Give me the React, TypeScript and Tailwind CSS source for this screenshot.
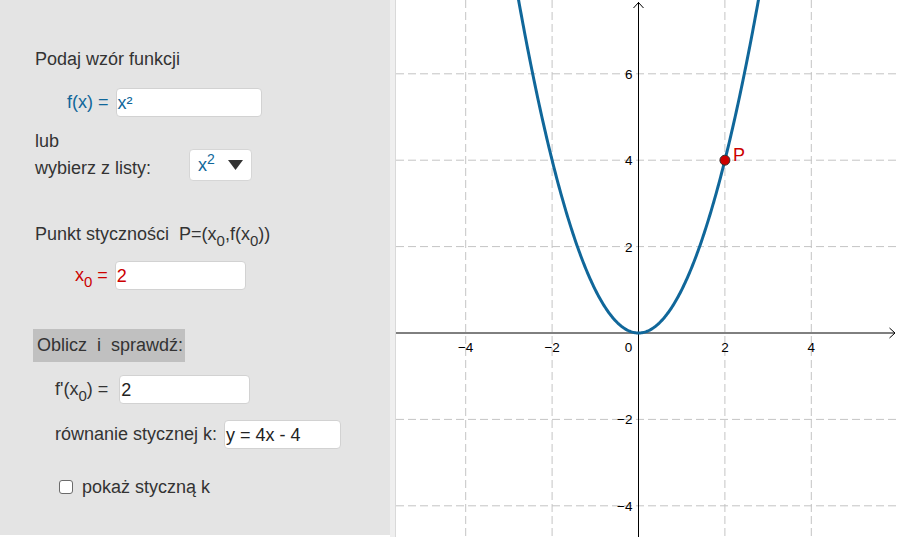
import React from 'react';

const BLUE = '#10679a';
const RED = '#cc0000';

// graph geometry, local svg coords
const W = 502;
const H = 537;
const OX = 242.5;
const OY = 333;
const S = 43.2;

function Sub({ children }: { children: React.ReactNode }) {
  return <span className="relative top-[6px] text-[15px] leading-none">{children}</span>;
}

function Field({ value, color, width }: { value: string; color?: string; width: string }) {
  return (
    <div
      className={`h-[29px] ${width} bg-white border border-[#d2d2d2] rounded-[4px] pl-[1px] flex items-center text-[18px] leading-none`}
      style={{ color: color ?? '#222' }}
    >
      {value}
    </div>
  );
}

function Graph() {
  const pts: string[] = [];
  for (let x = -3; x <= 3.0001; x += 0.02) {
    pts.push(`${(OX + x * S).toFixed(2)},${(OY - x * x * S).toFixed(2)}`);
  }
  const xs = [-4, -2, 2, 4];
  const ys = [6, 4, 2, -2, -4];
  const fmt = (n: number) => (n < 0 ? `\u2212${-n}` : `${n}`);
  return (
    <svg width={W} height={H} className="block" style={{ fontFamily: '"Liberation Sans", Arial, sans-serif' }}>
      {xs.map((v) => (
        <line key={`vx${v}`} x1={OX + v * S} x2={OX + v * S} y1={0} y2={H} stroke="#c4c4c4" strokeDasharray="8 4" />
      ))}
      {ys.map((v) => (
        <line key={`hy${v}`} x1={0} x2={W} y1={OY - v * S} y2={OY - v * S} stroke="#c4c4c4" strokeDasharray="8 4" />
      ))}
      {/* axes */}
      <line x1={0} x2={W - 3} y1={OY} y2={OY} stroke="#000" />
      <polyline points={`${W - 8.5},${OY - 5} ${W - 3},${OY} ${W - 8.5},${OY + 5}`} fill="none" stroke="#000" />
      <line x1={OX} x2={OX} y1={2} y2={H} stroke="#000" />
      <polyline points={`${OX - 5},${8} ${OX},${2.5} ${OX + 5},${8}`} fill="none" stroke="#000" />
      {xs.map((v) => (
        <text key={`lx${v}`} x={OX + v * S} y={352} fontSize={13.5} textAnchor="middle" fill="#000">
          {fmt(v)}
        </text>
      ))}
      <text x={OX - 10} y={352} fontSize={13.5} textAnchor="middle" fill="#000">
        0
      </text>
      {ys.map((v) => (
        <text key={`ly${v}`} x={OX - 6} y={OY - v * S + 5} fontSize={13.5} textAnchor="end" fill="#000">
          {fmt(v)}
        </text>
      ))}
      <polyline points={pts.join(' ')} fill="none" stroke={BLUE} strokeWidth={3} strokeLinejoin="round" />
      <circle cx={OX + 2 * S} cy={OY - 4 * S} r={5} fill={RED} stroke="#333" strokeWidth={1} />
      <text x={OX + 2 * S + 8} y={OY - 4 * S + 1} fontSize={18} fill={RED}>
        P
      </text>
    </svg>
  );
}

export default function App() {
  return (
    <div
      className="w-[898px] h-[537px] flex bg-white overflow-hidden text-[#333]"
      style={{ fontFamily: '"Liberation Sans", Arial, sans-serif' }}
    >
      <div className="w-[390px] h-[535px] bg-[#e4e4e4] pl-[35px] pt-[47px] flex flex-col text-[18px]">
        <div className="h-[24px] leading-[24px]">Podaj wzór funkcji</div>

        <div className="mt-[17px] pl-[32px] flex items-center gap-[7px]">
          <span style={{ color: BLUE }}>f(x) =</span>
          <Field value="x²" color={BLUE} width="w-[146px]" />
        </div>

        <div className="mt-[11px] flex items-end">
          <div className="flex flex-col leading-[27px] w-[154px]">
            <span>lub</span>
            <span>wybierz z listy:</span>
          </div>
          <div className="mb-[1px] h-[32px] w-[63px] bg-white border border-[#d6d6d6] rounded-[4px] flex items-center pl-[8px] gap-[13px]">
            <span className="leading-none" style={{ color: BLUE }}>
              x<span className="relative top-[-7px] text-[14px]">2</span>
            </span>
            <svg width="15" height="10" viewBox="0 0 15 10">
              <polygon points="0,0 15,0 7.5,10" fill="#333" />
            </svg>
          </div>
        </div>

        <div className="mt-[40px] h-[24px] leading-[24px] whitespace-pre">
          Punkt styczności  P=(x<Sub>0</Sub>,f(x<Sub>0</Sub>))
        </div>

        <div className="mt-[15px] pl-[40px] flex items-center gap-[7px]">
          <span style={{ color: RED }}>
            x<Sub>0</Sub> =
          </span>
          <Field value="2" color={RED} width="w-[131px]" />
        </div>

        <div className="mt-[39px] -ml-[2px] w-[152px] h-[33px] bg-[#c0c0c0] flex items-center pl-[4px] whitespace-pre">
          Oblicz  i  sprawdź:
        </div>

        <div className="mt-[13px] pl-[20px] flex items-center gap-[11px]">
          <span>
            f'(x<Sub>0</Sub>) =
          </span>
          <Field value="2" width="w-[131px]" />
        </div>

        <div className="mt-[16px] pl-[20px] flex items-center gap-[7px]">
          <span>równanie stycznej k:</span>
          <Field value="y = 4x - 4" width="w-[117px]" />
        </div>

        <div className="mt-[31px] pl-[24px] flex items-center gap-[9px] h-[14px]">
          <div className="w-[14px] h-[14px] bg-white border border-[#6b6b6b] rounded-[3px]" />
          <span className="leading-none">pokaż styczną k</span>
        </div>
      </div>
      <div className="w-[6px] h-full bg-[#efefef] border-r border-[#d9d9d9]" />
      <Graph />
    </div>
  );
}
